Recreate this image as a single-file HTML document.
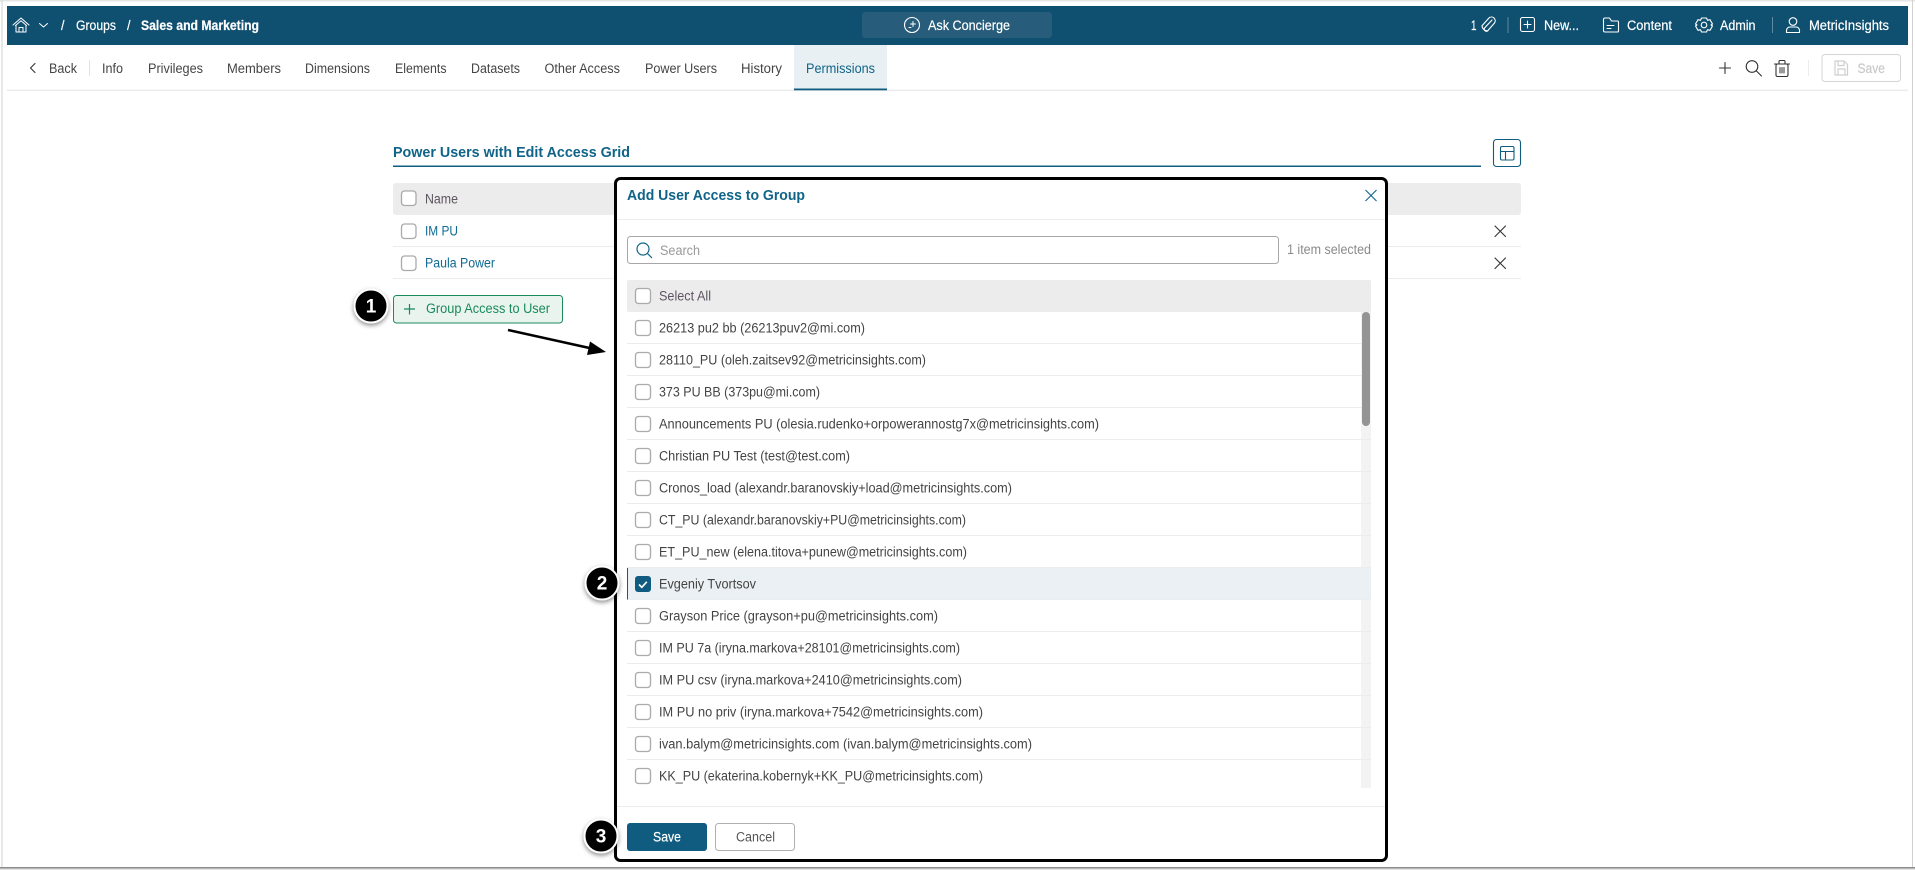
<!DOCTYPE html>
<html lang="en"><head><meta charset="utf-8"><title>Add User Access to Group</title>
<style>
html,body{margin:0;padding:0;background:#fff;width:1915px;height:870px;overflow:hidden}
svg{display:block}
text{font-family:"Liberation Sans",sans-serif;font-size:13.5px;fill:#444}
.w{fill:#fff;stroke:#fff;stroke-width:.2px}
.n{fill:#444}
.b{font-weight:700}
.cb{fill:#fff;stroke:#aaa;stroke-width:1.3}
.d{stroke:#ececec;stroke-width:1}
.i{fill:none;stroke:#fff;stroke-width:1.1;stroke-linecap:round;stroke-linejoin:round}
.k{fill:none;stroke:#333;stroke-width:1.1;stroke-linecap:round;stroke-linejoin:round}
.num{font-size:19px;font-weight:700;fill:#fff;text-anchor:middle}
</style></head>
<body>
<svg width="1915" height="870" viewBox="0 0 1915 870" xmlns="http://www.w3.org/2000/svg">
<defs><filter id="s" x="-40%" y="-40%" width="180%" height="180%"><feDropShadow dx="0" dy="2" stdDeviation="2.5" flood-color="#000" flood-opacity=".45"/></filter></defs>
<rect width="1915" height="870" fill="#fff"/>
<rect x="0" y="0" width="1915" height="1.5" fill="#e6e6e6"/>
<rect x="1.500" y="0" width="1" height="868" fill="#d2d2d2"/>
<rect x="1912" y="0" width="1" height="868" fill="#d2d2d2"/>
<rect x="0" y="867" width="1915" height="1.5" fill="#8c8c8c"/>
<rect x="0" y="868.5" width="1915" height="1.5" fill="#e2e2e2"/>

<!-- top bar -->
<rect x="7" y="6" width="1901" height="39" fill="#0f4f70"/>
<g class="i" stroke-width="1">
<path d="M13 25 21 18l8 7M15.500 25.500 21 20.800l5.500 4.700" stroke-width="1"/>
<path d="M16 25.500V32h10v-6.500M19 32v-4.500h4V32" stroke-width="1"/>
<path d="M39.500 23.500 43.500 27l4-3.500" stroke-width="1"/>
</g>
<text class="w" x="61" y="30" textLength="3.500" lengthAdjust="spacingAndGlyphs">/</text>
<text class="w" x="76" y="30" textLength="40" lengthAdjust="spacingAndGlyphs">Groups</text>
<text class="w" x="127" y="30" textLength="3.500" lengthAdjust="spacingAndGlyphs">/</text>
<text class="w b" x="141" y="30" textLength="118" lengthAdjust="spacingAndGlyphs">Sales and Marketing</text>

<rect x="862" y="12" width="190" height="26" rx="3" fill="#275c7a"/>
<g class="i"><circle cx="912" cy="25" r="7.500"/><path d="M913 21.500v5M910.500 24h5M909 27.500h2" stroke-width="1"/></g>
<text class="w" x="928" y="30" textLength="82" lengthAdjust="spacingAndGlyphs">Ask Concierge</text>

<text class="w" x="1471" y="30" textLength="5.500" lengthAdjust="spacingAndGlyphs">1</text>
<path class="i" d="M1493.500 20.500l-7.500 8a2.200 2.200 0 0 0 3 3l7-8a3.800 3.800 0 0 0-5.300-5.300l-7.200 8a5.300 5.300 0 0 0 6 5" transform="translate(-1.500 -.5)" stroke-width="1"/>
<rect x="1507.500" y="17" width="1" height="16" fill="#5f89a1"/>
<g class="i"><rect x="1520.500" y="17.500" width="14" height="14" rx="2"/><path d="M1527.500 21v7M1524 24.500h7"/></g>
<text class="w" x="1544" y="30" textLength="35" lengthAdjust="spacingAndGlyphs">New...</text>
<g class="i"><path d="M1603.500 19.500a1.500 1.500 0 0 1 1.500-1.500h4.500l2 3h6a1 1 0 0 1 1 1v9a1 1 0 0 1-1 1H1605a1.500 1.500 0 0 1-1.500-1.500z"/><path d="M1607 25.500h7M1607 28.500h4" stroke-width="1"/></g>
<text class="w" x="1627" y="30" textLength="45" lengthAdjust="spacingAndGlyphs">Content</text>
<g class="i"><path d="M1701.500 18h5l1 2.300 2.500-.6 2.500 4.300-1.500 1 1.500 1-2.500 4.300-2.500-.6-1 2.300h-5l-1-2.300-2.500.6-2.500-4.300 1.500-1-1.500-1 2.500-4.300 2.500.6z"/><circle cx="1704" cy="25" r="2.800"/></g>
<text class="w" x="1720" y="30" textLength="35.500" lengthAdjust="spacingAndGlyphs">Admin</text>
<rect x="1772" y="17" width="1" height="16" fill="#5f89a1"/>
<g class="i"><circle cx="1793" cy="21.500" r="3.800"/><path d="M1786.500 32.500v-2a3.500 3.500 0 0 1 3.500-3.500h6a3.500 3.500 0 0 1 3.500 3.500v2z"/></g>
<text class="w" x="1809" y="30" textLength="80" lengthAdjust="spacingAndGlyphs">MetricInsights</text>

<!-- nav -->
<rect x="7" y="89.500" width="1901" height="1.500" fill="#ececec"/>
<rect x="794" y="45" width="93" height="45" fill="#e9f0f4"/>
<rect x="794" y="88.500" width="93" height="1.800" fill="#0f5c80"/>
<path class="k" d="M35 63.500 30.500 68l4.500 4.500" stroke-width="1.100"/>
<text x="49" y="73" textLength="28" lengthAdjust="spacingAndGlyphs">Back</text>
<rect x="89" y="60" width="1" height="16" fill="#e2e2e2"/>
<text x="102" y="73" textLength="21" lengthAdjust="spacingAndGlyphs">Info</text>
<text x="148" y="73" textLength="55" lengthAdjust="spacingAndGlyphs">Privileges</text>
<text x="227" y="73" textLength="54" lengthAdjust="spacingAndGlyphs">Members</text>
<text x="305" y="73" textLength="65" lengthAdjust="spacingAndGlyphs">Dimensions</text>
<text x="395" y="73" textLength="51.500" lengthAdjust="spacingAndGlyphs">Elements</text>
<text x="471" y="73" textLength="49" lengthAdjust="spacingAndGlyphs">Datasets</text>
<text x="544.500" y="73" textLength="75.500" lengthAdjust="spacingAndGlyphs">Other Access</text>
<text x="645" y="73" textLength="72" lengthAdjust="spacingAndGlyphs">Power Users</text>
<text x="741" y="73" textLength="41" lengthAdjust="spacingAndGlyphs">History</text>
<text x="806" y="73" textLength="69" lengthAdjust="spacingAndGlyphs" style="fill:#0f6488">Permissions</text>

<path class="k" d="M1725 62.500v11M1719.500 68h11"/>
<g class="k"><circle cx="1752" cy="66.500" r="5.800"/><path d="M1756.500 71l5 5"/></g>
<g class="k"><path d="M1774.500 64h15M1779 64v-2.500a1 1 0 0 1 1-1h4a1 1 0 0 1 1 1V64"/><rect x="1776" y="64" width="12" height="12.500" rx="1.500"/><path d="M1780 67.500v5.500M1782 67.500v5.500M1784 67.500v5.500" stroke-width="1"/></g>
<rect x="1808" y="60" width="1" height="16" fill="#ececec"/>
<rect x="1822" y="54.500" width="78.500" height="27" rx="3" fill="#fff" stroke="#d4d4d4" stroke-width="1"/>
<g fill="none" stroke="#cfcfcf" stroke-width="1.200"><path d="M1835 61h9l3.500 3.500V75h-12.500z"/><path d="M1838 61v4.500h6V61M1838 75v-6h7v6"/></g>
<text x="1857.500" y="73" textLength="27.500" lengthAdjust="spacingAndGlyphs" style="fill:#c9c9c9;stroke:#c9c9c9;stroke-width:.2px">Save</text>

<!-- grid behind dialog -->
<text class="b" x="393" y="157" textLength="237" lengthAdjust="spacingAndGlyphs" style="font-size:14.5px;fill:#0f6488">Power Users with Edit Access Grid</text>
<rect x="393" y="165.500" width="1088" height="1.500" fill="#0f5c80"/>
<rect x="1493.500" y="139.500" width="27" height="27" rx="3" fill="#fff" stroke="#0f5c80" stroke-width="1.100"/>
<g fill="none" stroke="#0f5c80" stroke-width="1.100"><rect x="1500.500" y="146.500" width="13.500" height="13.500" rx="1.500"/><path d="M1500.500 151.500h13.500M1505.500 151.500V160"/></g>
<rect x="393" y="183" width="1128" height="32" rx="3" fill="#ececec"/>
<rect class="cb" x="401.500" y="191" width="14.500" height="14.500" rx="3"/>
<text x="425" y="203.500" textLength="33" lengthAdjust="spacingAndGlyphs" style="fill:#5d5560">Name</text>
<rect class="cb" x="401.500" y="224" width="14.500" height="14.500" rx="3"/>
<text x="425" y="235.500" textLength="33" lengthAdjust="spacingAndGlyphs" style="fill:#0f6a94">IM PU</text>
<line class="d" x1="393" x2="1521" y1="246.500" y2="246.500"/>
<rect class="cb" x="401.500" y="256" width="14.500" height="14.500" rx="3"/>
<text x="425" y="267.500" textLength="70" lengthAdjust="spacingAndGlyphs" style="fill:#0f6a94">Paula Power</text>
<line class="d" x1="393" x2="1521" y1="278.500" y2="278.500"/>
<path class="k" d="M1495 226l10.500 10.500M1505.500 226 1495 236.500M1495 258l10.500 10.500M1505.500 258 1495 268.500"/>
<rect x="393.500" y="295.500" width="169" height="27.500" rx="3" fill="#e9f4ef" stroke="#1a8a5a" stroke-width="1"/>
<path fill="none" stroke="#1a8a5a" stroke-width="1.200" d="M409.500 304v10.500M404 309h11"/>
<text x="426" y="313" textLength="124" lengthAdjust="spacingAndGlyphs" style="fill:#1a8a5a">Group Access to User</text>

<!-- arrow -->
<path d="M508 330 594 349" stroke="#000" stroke-width="2.500"/>
<path d="M606 352 590 341.500 587 355z" fill="#000"/>

<!-- dialog -->
<rect x="615.500" y="178.500" width="771" height="682" rx="5" fill="#fff" stroke="#000" stroke-width="3"/>
<text class="b" x="627" y="200" textLength="178" lengthAdjust="spacingAndGlyphs" style="font-size:14.5px;fill:#0f6488">Add User Access to Group</text>
<path fill="none" stroke="#0f6488" stroke-width="1.100" d="M1365.500 190l11 11M1376.500 190l-11 11"/>
<line class="d" x1="617" x2="1385" y1="219.500" y2="219.500"/>
<rect x="627.500" y="236.500" width="651" height="27" rx="3" fill="#fff" stroke="#a8a8a8" stroke-width="1"/>
<g fill="none" stroke="#0f6488" stroke-width="1.200"><circle cx="643" cy="249" r="6"/><path d="M647.500 253.500l4.500 4.500"/></g>
<text x="660" y="255" textLength="40" lengthAdjust="spacingAndGlyphs" style="fill:#999">Search</text>
<text x="1287" y="254" textLength="84" lengthAdjust="spacingAndGlyphs" style="fill:#8a8a8a">1 item selected</text>
<rect x="627" y="280" width="744" height="32" rx="2" fill="#ececec"/>
<rect class="cb" x="635.500" y="288.500" width="15" height="15" rx="3"/>
<text x="659" y="300.500" textLength="52" lengthAdjust="spacingAndGlyphs" style="fill:#5d5560">Select All</text>

<!-- list -->
<rect x="1361" y="312" width="10" height="476" fill="#f3f3f3"/>
<g class="d">
<line x1="627" x2="1371" y1="343.500" y2="343.500"/><line x1="627" x2="1371" y1="375.500" y2="375.500"/><line x1="627" x2="1371" y1="407.500" y2="407.500"/><line x1="627" x2="1371" y1="439.500" y2="439.500"/><line x1="627" x2="1371" y1="471.500" y2="471.500"/><line x1="627" x2="1371" y1="503.500" y2="503.500"/><line x1="627" x2="1371" y1="535.500" y2="535.500"/><line x1="627" x2="1371" y1="567.500" y2="567.500"/><line x1="627" x2="1371" y1="599.500" y2="599.500"/><line x1="627" x2="1371" y1="631.500" y2="631.500"/><line x1="627" x2="1371" y1="663.500" y2="663.500"/><line x1="627" x2="1371" y1="695.500" y2="695.500"/><line x1="627" x2="1371" y1="727.500" y2="727.500"/><line x1="627" x2="1371" y1="759.500" y2="759.500"/>
</g>
<rect x="627" y="568" width="744" height="31.500" fill="#eaf0f4"/>
<rect x="627" y="568" width="1" height="31.500" fill="#0f5c80"/>
<rect x="1362" y="312" width="8" height="114" rx="4" fill="#949494"/>

<rect class="cb" x="635.500" y="320.500" width="15" height="15" rx="3"/>
<text x="659" y="332.500" textLength="206" lengthAdjust="spacingAndGlyphs">26213 pu2 bb (26213puv2@mi.com)</text>
<rect class="cb" x="635.500" y="352.500" width="15" height="15" rx="3"/>
<text x="659" y="364.500" textLength="267" lengthAdjust="spacingAndGlyphs">28110_PU (oleh.zaitsev92@metricinsights.com)</text>
<rect class="cb" x="635.500" y="384.500" width="15" height="15" rx="3"/>
<text x="659" y="396.500" textLength="161" lengthAdjust="spacingAndGlyphs">373 PU BB (373pu@mi.com)</text>
<rect class="cb" x="635.500" y="416.500" width="15" height="15" rx="3"/>
<text x="659" y="428.500" textLength="440" lengthAdjust="spacingAndGlyphs">Announcements PU (olesia.rudenko+orpowerannostg7x@metricinsights.com)</text>
<rect class="cb" x="635.500" y="448.500" width="15" height="15" rx="3"/>
<text x="659" y="460.500" textLength="191" lengthAdjust="spacingAndGlyphs">Christian PU Test (test@test.com)</text>
<rect class="cb" x="635.500" y="480.500" width="15" height="15" rx="3"/>
<text x="659" y="492.500" textLength="353" lengthAdjust="spacingAndGlyphs">Cronos_load (alexandr.baranovskiy+load@metricinsights.com)</text>
<rect class="cb" x="635.500" y="512.500" width="15" height="15" rx="3"/>
<text x="659" y="524.500" textLength="307" lengthAdjust="spacingAndGlyphs">CT_PU (alexandr.baranovskiy+PU@metricinsights.com)</text>
<rect class="cb" x="635.500" y="544.500" width="15" height="15" rx="3"/>
<text x="659" y="556.500" textLength="308" lengthAdjust="spacingAndGlyphs">ET_PU_new (elena.titova+punew@metricinsights.com)</text>
<rect x="635" y="576" width="16" height="16" rx="3" fill="#0f5c80"/>
<path d="M639 584.500l2.800 2.800 5-5.500" fill="none" stroke="#fff" stroke-width="1.700"/>
<text x="659" y="588.500" textLength="97" lengthAdjust="spacingAndGlyphs">Evgeniy Tvortsov</text>
<rect class="cb" x="635.500" y="608.500" width="15" height="15" rx="3"/>
<text x="659" y="620.500" textLength="279" lengthAdjust="spacingAndGlyphs">Grayson Price (grayson+pu@metricinsights.com)</text>
<rect class="cb" x="635.500" y="640.500" width="15" height="15" rx="3"/>
<text x="659" y="652.500" textLength="301" lengthAdjust="spacingAndGlyphs">IM PU 7a (iryna.markova+28101@metricinsights.com)</text>
<rect class="cb" x="635.500" y="672.500" width="15" height="15" rx="3"/>
<text x="659" y="684.500" textLength="303" lengthAdjust="spacingAndGlyphs">IM PU csv (iryna.markova+2410@metricinsights.com)</text>
<rect class="cb" x="635.500" y="704.500" width="15" height="15" rx="3"/>
<text x="659" y="716.500" textLength="324" lengthAdjust="spacingAndGlyphs">IM PU no priv (iryna.markova+7542@metricinsights.com)</text>
<rect class="cb" x="635.500" y="736.500" width="15" height="15" rx="3"/>
<text x="659" y="748.500" textLength="373" lengthAdjust="spacingAndGlyphs">ivan.balym@metricinsights.com (ivan.balym@metricinsights.com)</text>
<rect class="cb" x="635.500" y="768.500" width="15" height="15" rx="3"/>
<text x="659" y="780.500" textLength="324" lengthAdjust="spacingAndGlyphs">KK_PU (ekaterina.kobernyk+KK_PU@metricinsights.com)</text>

<!-- footer -->
<line class="d" x1="617" x2="1385" y1="806.500" y2="806.500"/>
<rect x="627" y="823" width="80" height="28" rx="3" fill="#0f5c80"/>
<text class="w" x="653" y="841.500" textLength="28" lengthAdjust="spacingAndGlyphs">Save</text>
<rect x="715.500" y="823.500" width="79" height="27" rx="3" fill="#fff" stroke="#b0b0b0" stroke-width="1"/>
<text x="736" y="841.500" textLength="39" lengthAdjust="spacingAndGlyphs" style="fill:#555">Cancel</text>

<!-- callouts -->
<g filter="url(#s)"><circle cx="371" cy="306" r="16.500" fill="#000" stroke="#fff" stroke-width="2"/></g>
<text class="num" x="371" y="312.500">1</text>
<g filter="url(#s)"><circle cx="602" cy="583" r="16.500" fill="#000" stroke="#fff" stroke-width="2"/></g>
<text class="num" x="602" y="589.500">2</text>
<g filter="url(#s)"><circle cx="601" cy="836" r="16.500" fill="#000" stroke="#fff" stroke-width="2"/></g>
<text class="num" x="601" y="842.500">3</text>
</svg>
</body></html>
